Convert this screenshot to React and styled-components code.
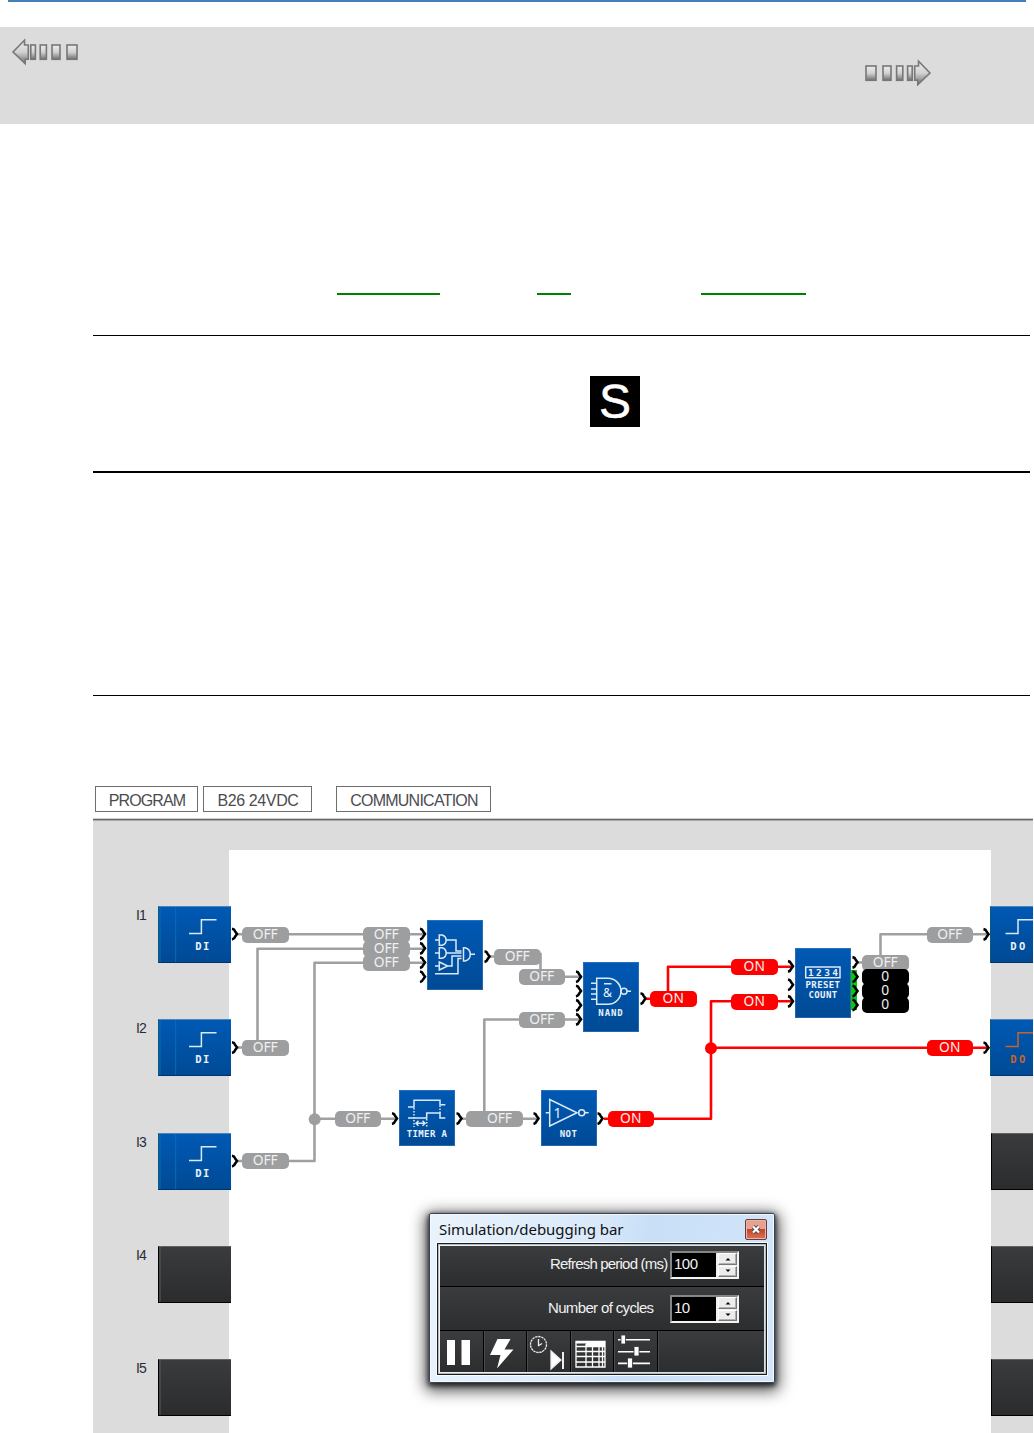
import React from 'react';
import styled, { createGlobalStyle, css } from 'styled-components';

const GlobalStyle = createGlobalStyle`
    * {
        box-sizing: border-box;
    }
    body {
        margin: 0;
        background: white;
        font-family: "Liberation Sans", Arial, sans-serif;
    }
`

// left / top corner of the white drawing sheet, wires and nodes are placed from here
const SHEET_X = 229;
const SHEET_Y = 850;

const Page = styled.div`
    width: 1034px;
    height: 1433px;
    overflow: hidden;
    display: flex;
    flex-direction: column;
`

const TopRule = styled.div`
    flex: none;
    height: 2px;
    margin: 0 8px 25px;
    background: #4a7ebb;
`

const NavBand = styled.div`
    flex: none;
    height: 97px;
    padding: 11px 102px 0 11px;
    display: flex;
    justify-content: space-between;
    align-items: flex-start;
    background: #dcdcdc;
`

const NavIcon = styled.svg`
    display: block;
    width: 68px;
    height: 28px;
    margin-top: ${props => props.$drop || 0}px;
    transform: ${props => (props.$flip ? 'scaleX(-1)' : 'none')};
`

const LinkRow = styled.div`
    flex: none;
    display: flex;
    height: 42px;
    margin-top: 169px;
    padding-left: 337px;
`

const LinkLine = styled.div`
    width: ${props => props.$width};
    height: 2px;
    margin-right: ${props => props.$gap || '0'};
    background: #008000;
`

const Section = styled.div`
    flex: none;
    height: ${props => props.$height};
    margin: 0 4px 0 93px;
    border-top: ${props => props.$line} solid black;
`

const SymbolBox = styled.div`
    width: 50px;
    height: 51px;
    margin: 40px 0 0 497px;
    display: flex;
    align-items: center;
    justify-content: center;
    background: black;
    color: white;
    font-size: 48px;
    line-height: 51px;
    -webkit-text-stroke: 0.5px white;
`

const Editor = styled.div`
    flex: none;
    width: 940px;
    margin-left: 93px;
    display: flex;
    flex-direction: column;
`

const TabBar = styled.div`
    display: flex;
    height: 32px;
    padding-left: 2px;
`

const Tab = styled.div`
    width: ${props => props.$width};
    height: 26px;
    margin-right: ${props => props.$gap || '0'};
    border: 1px solid #6e6e6e;
    display: flex;
    align-items: center;
    justify-content: center;
    color: #4c4c50;
    font-size: 16px;
    letter-spacing: ${props => props.$spacing};
    white-space: nowrap;
    padding: 3px 0 0 1px;
`

const EditorRule = styled.div`
    height: 3px;
    background: linear-gradient(#cfcfcf 0 1px, #686868 1px 2px, #a8a8a8 2px 3px);
`

const Workspace = styled.div`
    position: relative;
    display: flex;
    height: 612px;
    background: #dcdcdc;
`

const SideColumn = styled.div`
    flex: none;
    width: ${props => props.$width};
    padding-top: 85px;
    display: flex;
    flex-direction: column;
    gap: 57px;
    z-index: 1;
`

const Slot = styled.div`
    flex: none;
    display: flex;
    height: 56.3px;
    padding-left: ${props => (props.$output ? '0' : '43px')};
    margin-left: ${props => (props.$wide ? '-1px' : '0')};
`

const SlotName = styled.div`
    flex: none;
    width: 22px;
    padding-top: 1px;
    font-size: 14px;
    line-height: 16px;
    letter-spacing: -0.9px;
    color: #2b2b38;
`

const SlotBox = styled.div`
    flex: none;
    position: relative;
    width: ${props => props.$width};
    height: 57px;
    overflow: hidden;
    ${props => props.$filled ? css`
        background: linear-gradient(#0059b4, #004a95);
        border-top: 1px solid #4b83bb;
        border-left: 1px solid #0a5a80;
        border-bottom: 1px solid #00336c;
    ` : css`
        background: linear-gradient(#3a3b3c, #2b2c2d);
        border-top: 1px solid #606162;
        border-left: 1px solid #000;
        border-bottom: 1px solid #000;
    `}
`

const Drawing = styled.svg`
    display: block;
    width: 100%;
    height: ${props => props.$height}px;
    fill: none;
    stroke: ${props => props.$color || '#dbe9f7'};
    stroke-width: 1.5;
    overflow: visible;
    text {
        fill: #e6f0fa;
        stroke: none;
    }
`

const BlockLabel = styled.div`
    height: 10px;
    padding-left: ${props => props.$indent || '0'};
    text-align: center;
    white-space: nowrap;
    color: ${props => props.$color || '#eaf2fa'};
    font-family: "DejaVu Sans Mono", monospace;
    font-weight: bold;
    font-size: ${props => props.$size || '9px'};
    line-height: 10px;
    letter-spacing: ${props => props.$spacing || '0.4px'};
`

const Sheet = styled.div`
    position: relative;
    flex: none;
    width: 762px;
    margin-top: 29px;
    background: white;
`

const Wires = styled.svg`
    position: absolute;
    left: 0;
    top: 0;
    width: 762px;
    height: 583px;
    fill: none;
`

const Block = styled.div`
    position: absolute;
    left: ${props => props.$x - SHEET_X}px;
    top: ${props => props.$y - SHEET_Y}px;
    width: 56px;
    height: ${props => props.$height}px;
    background: linear-gradient(#0059b4, #004a95);
    box-shadow: inset 0 0 0 1px rgba(120, 170, 220, 0.3);
`

const pillColors = {
    off: '#9d9ea0',
    on: '#ff0000',
    value: '#000000',
};

const Pill = styled.div`
    position: absolute;
    left: ${props => props.$x - SHEET_X}px;
    top: ${props => props.$y - SHEET_Y}px;
    width: ${props => props.$width || 46.5}px;
    height: 16px;
    padding-left: ${props => props.$indent || '0'};
    border-radius: 5px;
    background: ${props => pillColors[props.$state]};
    color: #f0f0f0;
    font-family: "Noto Sans", sans-serif;
    font-size: 13.8px;
    line-height: 14px;
    text-align: center;
`

const Dialog = styled.div`
    position: absolute;
    left: 336px;
    top: 392px;
    z-index: 2;
    width: 346px;
    height: 170px;
    padding: 5px 6px 7px 6px;
    border: 1px solid #39424e;
    border-radius: 2px;
    background: linear-gradient(100deg, #e9f3fd 0%, #d9e9fa 45%, #c8dff7 60%, #d3e6fa 100%);
    box-shadow: inset 0 0 0 1px #f2f9ff, 0 2px 5px 1px rgba(0, 0, 0, 0.7), 0 4px 15px 4px rgba(0, 0, 0, 0.65);
    display: flex;
    flex-direction: column;
`

const TitleBar = styled.div`
    flex: none;
    height: 24px;
    display: flex;
    justify-content: space-between;
    padding: 0 1px 0 3px;
`

const Title = styled.div`
    color: #111;
    font-family: "Noto Sans", sans-serif;
    font-size: 15px;
    line-height: 20px;
    letter-spacing: -0.05px;
`

const CloseButton = styled.div`
    width: 22px;
    height: 21px;
    border: 1px solid #6a3b3b;
    border-radius: 2px;
    box-shadow: inset 0 0 0 1px #e8b5a8;
    background: linear-gradient(#e5a28f 0 45%, #c2442a 50%, #d9745a);
    display: flex;
    align-items: center;
    justify-content: center;
`

const Panel = styled.div`
    flex: 1;
    margin: 0 1px 0 1px;
    border: 1px solid #1b1b1b;
    box-shadow: inset 0 0 0 1px #b9b9b9, 0 0 0 1px #fbfdff;
    padding: 2px;
    display: flex;
    flex-direction: column;
`

const SettingRow = styled.div`
    flex: none;
    height: ${props => props.$height};
    padding-right: 25px;
    border-bottom: 1px solid black;
    background: linear-gradient(#3b3c3d, #2c2d2e);
    display: flex;
    justify-content: flex-end;
    padding-top: ${props => props.$top};
`

const SettingName = styled.div`
    width: ${props => props.$width};
    color: #f1f1f1;
    font-size: 15px;
    line-height: 26px;
    letter-spacing: ${props => props.$spacing};
    white-space: nowrap;
`

const Spinner = styled.div`
    display: flex;
    width: 69px;
    height: 28px;
    border: 2px solid;
    border-color: #868686 #f4f4f4 #f4f4f4 #868686;
    background: #f0f0f0;
`

const SpinnerValue = styled.div`
    width: 44px;
    padding-left: 2px;
    background: black;
    color: #f1f1f1;
    font-size: 15px;
    line-height: 22px;
    letter-spacing: -0.5px;
`

const SpinnerButtons = styled.div`
    flex: 1;
    margin-left: 2px;
    display: flex;
    flex-direction: column;
    gap: 1px;
`

const SpinnerButton = styled.div`
    flex: 1;
    display: flex;
    align-items: center;
    justify-content: center;
    background: #ececec;
    border: 1px solid;
    border-color: #fff #777 #777 #fff;
    box-shadow: inset -1px -1px 0 #b0b0b0;
`

const ToolRow = styled.div`
    flex: 1;
    display: flex;
    padding-right: 2px;
    background: linear-gradient(#3b3c3d, #2c2d2e);
`

const ToolButton = styled.div`
    flex: none;
    width: 43.5px;
    border-right: 1px solid black;
    box-shadow: 1px 0 0 #4b4b4c;
    svg {
        display: block;
        width: 43px;
        height: 41px;
        margin-left: -1px;
    }
`

const NavArrow = ({ flip, drop, id }) => (
    <NavIcon viewBox="0 0 68 28" $flip={flip} $drop={drop}>
        <defs>
            <linearGradient id={id} x1="0" y1="0" x2="0" y2="1">
                <stop offset="0" stopColor="#ececec" />
                <stop offset="0.5" stopColor="#d2d2d2" />
                <stop offset="1" stopColor="#707070" />
            </linearGradient>
        </defs>
        <g fill={`url(#${id})`} stroke="#777" strokeWidth="1.6">
            <path d="M2 14 L13.5 2.3 V7 H17.3 V21.3 H14.2 V25.6 Z" />
            <rect x="19.8" y="7" width="4.6" height="14.3" />
            <rect x="29.2" y="7" width="6.2" height="14.3" />
            <rect x="41" y="7" width="8" height="14.3" />
            <rect x="56" y="7" width="10" height="14.3" />
        </g>
    </NavIcon>
);

const InputSlot = ({ name, filled }) => (
    <Slot>
        <SlotName>{name}</SlotName>
        <SlotBox $width="73px" $filled={filled}>
            {filled ? (
                <>
                    <Drawing $height={34}>
                        <path d="M1 0 V56 M16.7 0 V56" stroke="#0a6db4" strokeWidth="1" />
                        <path d="M30 26.6 H42.4 V12.7 H57.5" />
                    </Drawing>
                    <BlockLabel $size="10.5px" $indent="16px" $spacing="1.5px">DI</BlockLabel>
                </>
            ) : (
                <Drawing $height={56}>
                    <path d="M1 0 V56" stroke="#5a5b5c" strokeWidth="1" />
                </Drawing>
            )}
        </SlotBox>
    </Slot>
);

const OutputSlot = ({ filled, color }) => (
    <Slot $output $wide={filled}>
        <SlotBox $width={filled ? '43px' : '42px'} $filled={filled}>
            {filled && (
                <>
                    <Drawing $height={34} $color={color}>
                        <path d="M14.5 26.6 H27 V12.7 H43" />
                    </Drawing>
                    <BlockLabel $size="10.5px" $indent="14px" $spacing="2.5px" $color={color}>DO</BlockLabel>
                </>
            )}
        </SlotBox>
    </Slot>
);

// tip position of every connector
const connectors = [
    [237.5, 934], [237.5, 1047.5], [237.5, 1161],
    [425.5, 934], [425.5, 948.3], [425.5, 962.5], [425.5, 976.7],
    [490, 956.5],
    [581.5, 976.7], [581.5, 991], [581.5, 1005.3], [581.5, 1019.3],
    [646, 998.5],
    [397.5, 1118.5], [462, 1118.5], [539, 1118.5], [603, 1118.5],
    [793.5, 966.3], [793.5, 984.7], [793.5, 1001.3],
    [858, 962.3], [858, 976.7], [858, 991], [858, 1005],
    [989, 934.3], [989, 1047.7],
];

const WireLayer = () => (
    <Wires viewBox={`${SHEET_X} ${SHEET_Y} 762 583`}>
        <g stroke="#9fa1a1" strokeWidth="2.6" strokeLinejoin="round">
            <path d="M238 934.3 H424" />
            <path d="M238 1047.5 H250" />
            <path d="M257.5 1042 V948.7 H424" />
            <path d="M238 1161 H314.5 V962.8 H424" />
            <path d="M314.5 1118.7 H396" />
            <path d="M462 1118.7 H538" />
            <path d="M484.3 1118 V1019.5 H580" />
            <path d="M490 956.5 H500 M540.5 953 V976.7 H580" />
            <path d="M858 962.5 H868 M880.5 960 V934.3 H987" />
        </g>
        <circle cx="314.7" cy="1119.2" r="6" fill="#9d9ea0" />
        <g stroke="#ff0000" strokeWidth="2.6" strokeLinejoin="round">
            <path d="M646 998.7 H655 M668 995 V966.7 H792" />
            <path d="M604 1118.7 H711 V1001.3 H792" />
            <path d="M711 1047.7 H987" />
        </g>
        <circle cx="711" cy="1048.3" r="6" fill="#ff0000" />
        <path d="M851 970 H857 V1010 H851 Z" fill="#0fc40f" />
        <g stroke="#000" strokeWidth="2.6">
            {connectors.map(([x, y]) => (
                <path key={`${x}-${y}`} d={`M${x - 5.5} ${y - 5.2} q2.4 .4 3 2.4 L${x - 0.5} ${y} L${x - 2.5} ${y + 2.8} q-.6 2 -3 2.6`} />
            ))}
        </g>
    </Wires>
);

const pills = [
    { x: 242, y: 927, state: 'off' },
    { x: 242, y: 1040, state: 'off' },
    { x: 242, y: 1153, state: 'off' },
    { x: 363, y: 927, state: 'off' },
    { x: 363, y: 941, state: 'off' },
    { x: 363, y: 955, state: 'off' },
    { x: 494, y: 949, state: 'off' },
    { x: 518.5, y: 969, state: 'off' },
    { x: 518.5, y: 1012, state: 'off' },
    { x: 334.5, y: 1111, state: 'off' },
    { x: 466, y: 1111, state: 'off', width: 57, indent: '10px' },
    { x: 607.5, y: 1111, state: 'on' },
    { x: 650, y: 991, state: 'on' },
    { x: 731, y: 959, state: 'on' },
    { x: 731, y: 994, state: 'on' },
    { x: 862, y: 955, state: 'off' },
    { x: 862, y: 969, state: 'value' },
    { x: 862, y: 983, state: 'value' },
    { x: 862, y: 997, state: 'value' },
    { x: 926.5, y: 927, state: 'off' },
    { x: 926.5, y: 1040, state: 'on' },
];

const pillText = { off: 'OFF', on: 'ON', value: '0' };

const Blocks = () => (
    <>
        <Block $x={427} $y={920} $height={70}>
            <Drawing $height={70}>
                <path d="M8 20 H12.3 M12.3 15 H15 C20.5 16.5 20.5 24 15 25.3 H12.3 Z M19.3 20 H29 V31 H34.5" />
                <path d="M8 33 H12.3 M12.3 27.7 H15 C20.5 29 20.5 37 15 38.3 H12.3 Z M19.3 33 H34.5" />
                <path d="M8 46 H12.3 M12.3 42 V50 L20.7 46 Z M20.7 46 H25 V36 H34.5" />
                <path d="M8 53.7 H31 V38.5 H34.5" />
                <path d="M36.5 27.7 H38 C45 29.5 45 39.5 38 41 H36.5 Z M43.3 34.3 H48" />
            </Drawing>
        </Block>
        <Block $x={583} $y={962} $height={70}>
            <Drawing $height={46}>
                <path d="M13.7 16.3 H25 A13 13 0 0 1 25 42.3 H13.7 Z" />
                <path d="M8 21.3 H13.7 M8 27 H13.7 M8 32 H13.7 M8 37.3 H13.7" />
                <circle cx="41" cy="29.3" r="3" />
                <path d="M44 29.3 H48 M21 21.7 H28.5" />
                <text x="20" y="34.5" fontSize="13" fontFamily="Noto Sans" textLength="9" lengthAdjust="spacingAndGlyphs">&amp;</text>
            </Drawing>
            <BlockLabel $spacing="0.9px">NAND</BlockLabel>
        </Block>
        <Block $x={399} $y={1090} $height={56}>
            <Drawing $height={39}>
                <path d="M9 17 H15 V10.3 H41 V14.7 H46.3" />
                <path d="M9 28 H27.7 V23 H41 V28 H46.3" />
                <path d="M15 18 V37 M27.7 29 V37 M41 15.5 V23" strokeDasharray="1.4 1.6" />
                <path d="M17 33.3 H26 M19.5 30.8 L17 33.3 L19.5 35.8 M23.5 30.8 L26 33.3 L23.5 35.8" />
            </Drawing>
            <BlockLabel>TIMER A</BlockLabel>
        </Block>
        <Block $x={540.5} $y={1090} $height={56}>
            <Drawing $height={39}>
                <path d="M4.7 22.7 H8.7 V9.5 L36 22.7 L8.7 36 V22.7" />
                <circle cx="40.7" cy="22.7" r="3" />
                <path d="M43.7 22.7 H47.7" />
                <text x="12.5" y="27.5" fontSize="14" fontFamily="Noto Sans">1</text>
            </Drawing>
            <BlockLabel>NOT</BlockLabel>
        </Block>
        <Block $x={795} $y={948} $height={70}>
            <Drawing $height={32}>
                <path d="M10.7 19 H45 V29.7 H10.7 Z" />
                <text x="13" y="27.8" fontSize="9.5" fontWeight="bold" fontFamily="DejaVu Sans Mono" textLength="30">1234</text>
            </Drawing>
            <BlockLabel>PRESET</BlockLabel>
            <BlockLabel>COUNT</BlockLabel>
        </Block>
    </>
);

const SpinField = ({ value }) => (
    <Spinner>
        <SpinnerValue>{value}</SpinnerValue>
        <SpinnerButtons>
            <SpinnerButton>
                <svg width="6" height="4"><path d="M0.5 3.5 L3 1 L5.5 3.5 Z" fill="#000" /></svg>
            </SpinnerButton>
            <SpinnerButton>
                <svg width="6" height="4"><path d="M0.5 0.5 L3 3 L5.5 0.5 Z" fill="#000" /></svg>
            </SpinnerButton>
        </SpinnerButtons>
    </Spinner>
);

const SimulationBar = () => (
    <Dialog>
        <TitleBar>
            <Title>Simulation/debugging bar</Title>
            <CloseButton>
                <svg width="10" height="9" viewBox="0 0 10 9">
                    <path d="M2 1.5 L8 7.5 M8 1.5 L2 7.5" stroke="#5c4a4a" strokeWidth="4" />
                    <path d="M2 1.5 L8 7.5 M8 1.5 L2 7.5" stroke="#fff" strokeWidth="2.2" />
                </svg>
            </CloseButton>
        </TitleBar>
        <Panel>
            <SettingRow $height="41px" $top="5px">
                <SettingName $width="120px" $spacing="-0.8px">Refresh period (ms)</SettingName>
                <SpinField value="100" />
            </SettingRow>
            <SettingRow $height="44px" $top="8px">
                <SettingName $width="122px" $spacing="-0.65px">Number of cycles</SettingName>
                <SpinField value="10" />
            </SettingRow>
            <ToolRow>
                <ToolButton>
                    <svg viewBox="0 0 43 41" fill="#fff">
                        <path d="M8 9 H16 V34 H8 Z M22.5 9 H31 V34 H22.5 Z" />
                    </svg>
                </ToolButton>
                <ToolButton>
                    <svg viewBox="0 0 43 41" fill="#fff">
                        <path d="M14.5 8 H27.5 L21.5 18.5 H30.5 L14 37.5 L17.5 24 H7 Z" />
                    </svg>
                </ToolButton>
                <ToolButton>
                    <svg viewBox="0 0 43 41" fill="none" stroke="#eee" strokeWidth="1.3">
                        <circle cx="12.5" cy="13.5" r="8" strokeDasharray="2.4 0.7" />
                        <path d="M12.5 8 V15 M12 15 L16 12.5" />
                        <path d="M25 20 V38 L35 29 Z" fill="#fff" />
                        <path d="M37 21 V38" strokeWidth="2" />
                    </svg>
                </ToolButton>
                <ToolButton>
                    <svg viewBox="0 0 43 41" fill="none" stroke="#fff" strokeWidth="1.3">
                        <path d="M6 10.5 H35 V36 H6 Z" />
                        <path d="M6 10 H35 V15 H16 V12.5 H6 Z" fill="#fff" stroke="none" />
                        <path d="M6 15.5 H35 M6 20.5 H35 M6 25.5 H35 M6 31 H35 M16 13 V36 M22.5 14 V36 M29 14 V36 M32.5 14 V36" />
                    </svg>
                </ToolButton>
                <ToolButton>
                    <svg viewBox="0 0 43 41" fill="#fff">
                        <path d="M5 8 H37 V9.6 H5 Z M5 20 H37 V21.6 H5 Z M5 31.6 H37 V33.2 H5 Z" />
                        <path d="M8 4 H12.5 V13 H8 Z M21 15.5 H26 V25 H21 Z M14.5 27 H19.5 V37 H14.5 Z" stroke="#333" strokeWidth="0.8" />
                    </svg>
                </ToolButton>
            </ToolRow>
        </Panel>
    </Dialog>
);

const App = () => {
    return (
        <>
            <GlobalStyle />
            <Page>
                <TopRule />
                <NavBand>
                    <NavArrow id="back" />
                    <NavArrow id="next" flip drop={21} />
                </NavBand>
                <LinkRow>
                    <LinkLine $width="103px" $gap="97px" />
                    <LinkLine $width="34px" $gap="130px" />
                    <LinkLine $width="105px" />
                </LinkRow>
                <Section $line="1px" $height="136px">
                    <SymbolBox>S</SymbolBox>
                </Section>
                <Section $line="2px" $height="224px" />
                <Section $line="1px" $height="91px" />
                <Editor>
                    <TabBar>
                        <Tab $width="103px" $gap="5px" $spacing="-0.85px">PROGRAM</Tab>
                        <Tab $width="109px" $gap="24px" $spacing="-0.4px">B26 24VDC</Tab>
                        <Tab $width="155px" $spacing="-0.75px">COMMUNICATION</Tab>
                    </TabBar>
                    <EditorRule />
                    <Workspace>
                        <SideColumn $width="136px">
                            <InputSlot name="I1" filled />
                            <InputSlot name="I2" filled />
                            <InputSlot name="I3" filled />
                            <InputSlot name="I4" />
                            <InputSlot name="I5" />
                        </SideColumn>
                        <Sheet>
                            <WireLayer />
                            {pills.map((pill) => (
                                <Pill
                                    key={`${pill.x}-${pill.y}`}
                                    $x={pill.x}
                                    $y={pill.y}
                                    $width={pill.width}
                                    $indent={pill.indent}
                                    $state={pill.state}
                                >
                                    {pillText[pill.state]}
                                </Pill>
                            ))}
                            <Blocks />
                        </Sheet>
                        <SideColumn $width="42px">
                            <OutputSlot filled />
                            <OutputSlot filled color="#c9632c" />
                            <OutputSlot />
                            <OutputSlot />
                            <OutputSlot />
                        </SideColumn>
                        <SimulationBar />
                    </Workspace>
                </Editor>
            </Page>
        </>
    );
};

export default App;
